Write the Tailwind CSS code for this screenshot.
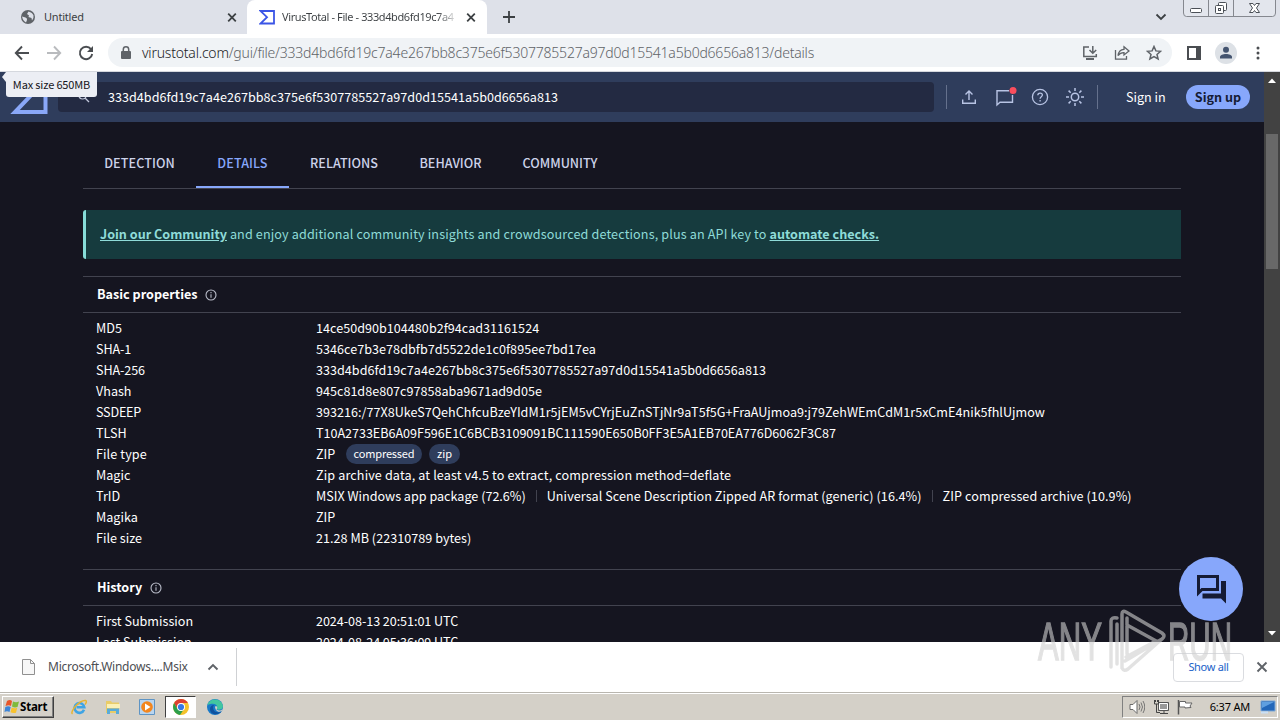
<!DOCTYPE html>
<html lang="en">
  <head>
    <meta charset="UTF-8" />
    <meta name="viewport" content="width=device-width, initial-scale=1.0" />
    <title>VirusTotal - File</title>
    <script src="https://cdn.jsdelivr.net/npm/@tailwindcss/browser@4"></script>
  </head>
  <body
    class="relative flex flex-col w-[1280px] h-[720px] overflow-hidden whitespace-nowrap bg-white font-['Noto_Sans',sans-serif]"
  >
    <!-- Tab strip -->
    <div class="flex h-[34px] shrink-0 bg-[#dee1e9] text-[11px] text-[#3c4043]">
      <div class="flex items-center w-[247px] pl-5 pr-[7px]">
        <svg class="w-4 h-4" viewBox="0 0 16 16">
          <circle cx="8" cy="8" r="7" fill="#5f6368" />
          <path d="M2 7.500l3.500 1q2 .5 1.500 2.500l-1 2.500Q3 12 2 7.500zM8.500 2.500L7 5l2 1.500L8.500 8l3 1 .500 2.500q2-2 1.500-5-1-3-5-4z" fill="#dee1e9" />
        </svg>
        <span class="ml-[8px] flex-1 tracking-[-0.2px]">Untitled</span>
        <svg class="w-4 h-4" viewBox="0 0 16 16"><path d="M4.200 4.700l7.600 7.600M11.800 4.700l-7.600 7.600" stroke="#3c4043" stroke-width="1.800" /></svg>
      </div>
      <div class="flex items-center w-[240px] rounded-t-lg bg-white pl-3 pr-2">
        <svg class="w-[17px] h-4" viewBox="0 0 17 16"><path d="M1.500 2h13.500v12.500H1.500L8 8.200z" fill="none" stroke="#3b55e6" stroke-width="1.800" /></svg>
        <span class="ml-[6px] w-[176px] overflow-hidden tracking-[-0.4px] text-transparent bg-clip-text bg-linear-to-r from-[#3c4043] from-88% to-white">VirusTotal - File - 333d4bd6fd19c7a4</span>
        <svg class="ml-[5px] w-4 h-4 shrink-0" viewBox="0 0 16 16"><path d="M4.200 4.700l7.600 7.600M11.800 4.700l-7.600 7.600" stroke="#3c4043" stroke-width="1.800" /></svg>
      </div>
      <div class="flex flex-1 items-center pl-[15px]">
        <svg class="w-[14px] h-[14px]" viewBox="0 0 14 14"><path d="M7 1v12M1 7h12" stroke="#3c4043" stroke-width="1.800" /></svg>
        <svg class="ml-auto mr-[16px] w-3 h-3" viewBox="0 0 12 12"><path d="M1.500 3.500L6 8l4.500-4.500" fill="none" stroke="#3c4043" stroke-width="1.800" /></svg>
        <svg class="self-start w-[93px] h-[17px] mr-[4px]" viewBox="0 0 93 17">
          <path d="M.5 0v13q0 3.500 3 3.500h86q3 0 3-3.500V0M25.500 0v16M50.500 0v16" fill="#e3e6ed" stroke="#85888f" />
          <rect x="7.500" y="8.500" width="11" height="4" rx="1" fill="#fff" stroke="#4b5057" />
          <rect x="35.500" y="2.500" width="8" height="8" rx="1" fill="#fff" stroke="#4b5057" />
          <rect x="32.500" y="5.500" width="8" height="8" rx="1" fill="#fff" stroke="#4b5057" />
          <rect x="35.500" y="8.500" width="2" height="2" fill="none" stroke="#4b5057" />
          <path d="M66.500 3.500h3.500l1.500 2 1.500-2h3.500l-3 4.500 3 4.500h-3.500l-1.500-2-1.500 2h-3.500l3-4.500z" fill="#fff" stroke="#4b5057" />
        </svg>
      </div>
    </div>

    <!-- Toolbar -->
    <div class="flex items-center h-[38px] shrink-0 border-b border-[#d5d8de] bg-white pl-[14px] pr-[14px]">
      <svg class="w-4 h-4" viewBox="0 0 16 16"><path d="M15 8H2M8 1.500L1.800 8 8 14.500" fill="none" stroke="#4a4d51" stroke-width="1.900" /></svg>
      <svg class="ml-4 w-4 h-4" viewBox="0 0 16 16"><path d="M1 8h13M8 1.500L14.200 8 8 14.500" fill="none" stroke="#b9bbbe" stroke-width="1.900" /></svg>
      <svg class="ml-4 w-4 h-4" viewBox="0 0 16 16"><path d="M13 4.200A6.200 6.200 0 1 0 14.200 9" fill="none" stroke="#4a4d51" stroke-width="1.900" /><path d="M15 1v6H9z" fill="#4a4d51" /></svg>
      <div class="flex items-center ml-[14px] w-[1064px] h-[29px] rounded-full bg-[#f0f3f6] pl-[13px] pr-[10px] text-[#5f6368]">
        <svg class="w-[10px] h-[14px]" viewBox="0 0 10 14"><rect x="0" y="5" width="10" height="8" rx="1" fill="#5f6368" /><path d="M2.300 6V3.500a2.700 2.700 0 0 1 5.400 0V6" fill="none" stroke="#5f6368" stroke-width="1.500" /></svg>
        <span class="ml-[11px] text-[14px] font-light tracking-[-0.21px]"><span class="text-[#202124]">virustotal.com</span>/gui/file/333d4bd6fd19c7a4e267bb8c375e6f5307785527a97d0d15541a5b0d6656a813/details</span>
        <svg class="ml-auto w-4 h-4" viewBox="0 0 16 16" fill="none" stroke="#5f6368" stroke-width="1.500"><path d="M7 2H1.800v9.500h12.500V9" /><path d="M4 14h8" stroke-width="2" /><path d="M10.800 1v7M7.500 5l3.300 3.300L14.200 5" /></svg>
        <svg class="ml-4 w-4 h-4" viewBox="0 0 16 16" fill="none" stroke="#5f6368" stroke-width="1.300"><path d="M1.500 5v9.200h11V11" /><path d="M10 1.800L15 6l-5 4V7.600C7 7.500 5.500 8.500 4 10.500 4.500 7 6.500 4.500 10 4.300z" /></svg>
        <svg class="ml-4 w-4 h-4" viewBox="0 0 16 16"><path d="M8 1.500l1.900 4.400 4.700.4-3.600 3.100 1.100 4.600L8 11.600 3.900 14 5 9.400 1.400 6.300l4.700-.4z" fill="none" stroke="#5f6368" stroke-width="1.500" /></svg>
      </div>
      <svg class="ml-[15px] w-[14px] h-[14px]" viewBox="0 0 14 14"><path d="M1 1h12v12H1z" fill="none" stroke="#4a4d51" stroke-width="2" /><path d="M9 1h5v12H9z" fill="#4a4d51" /></svg>
      <svg class="ml-[14px] w-[22px] h-[22px]" viewBox="0 0 22 22"><circle cx="11" cy="11" r="11" fill="#dde1e6" /><circle cx="11" cy="7.800" r="3" fill="#44546f" /><path d="M5 16.500v-1.500c0-4 12-4 12 0v1.500z" fill="#44546f" /></svg>
      <svg class="ml-auto mr-[6px] w-[4px] h-[14px]" viewBox="0 0 4 14" fill="#4a4d51"><circle cx="2" cy="2" r="1.500" /><circle cx="2" cy="7" r="1.500" /><circle cx="2" cy="12" r="1.500" /></svg>
    </div>

    <!-- Page viewport -->
    <div class="flex h-[570px] shrink-0 overflow-hidden font-['Noto_Sans_CJK_SC',sans-serif]">
      <div class="w-[1264px] bg-[#151520] text-white">
        <header class="flex items-center h-[50px] bg-[#2f3d5c] pl-[9px] pr-[14px]">
          <svg class="w-10 h-[34px] mt-[-1px]" viewBox="0 0 40 34"><path d="M3 2h33.500v30H6L20.500 17z" fill="none" stroke="#8aa8f8" stroke-width="4" /></svg>
          <div class="flex items-center ml-[9px] w-[876px] h-[30px] rounded bg-[#232a42] pl-5 text-[12.6px]">
            <svg class="w-3 h-3" viewBox="0 0 12 12"><circle cx="4.500" cy="4.500" r="3.500" fill="none" stroke="#c3c9dc" stroke-width="1.200" /><path d="M7 7l4 4" stroke="#c3c9dc" stroke-width="1.200" /></svg>
            <span class="ml-[18px] tracking-[0.02px]">333d4bd6fd19c7a4e267bb8c375e6f5307785527a97d0d15541a5b0d6656a813</span>
          </div>
          <div class="ml-3 w-px h-6 bg-[#65718d]"></div>
          <svg class="ml-[14px] w-4 h-4" viewBox="0 0 16 16" fill="none" stroke="#b8c4e4" stroke-width="1.400"><path d="M8 11V2M4.500 5.500L8 2l3.500 3.500M1.700 10.500v3.800h12.600v-3.800" /></svg>
          <svg class="ml-[18px] w-[22px] h-[20px]" viewBox="0 0 22 20"><path d="M17.500 8v7.300H5L2 18V3.700h12" fill="none" stroke="#b8c4e4" stroke-width="1.400" /><circle cx="18" cy="3.500" r="3.500" fill="#fb4e5d" /></svg>
          <svg class="ml-[14px] w-[18px] h-[18px]" viewBox="0 0 18 18" fill="none" stroke="#b8c4e4" stroke-width="1.300"><circle cx="9" cy="9" r="7.600" /><path d="M6.800 7.300c0-3 4.600-2.900 4.600-.2 0 1.700-2.300 1.700-2.300 3.700M9.100 12v1.500" /></svg>
          <svg class="ml-[16px] w-5 h-5" viewBox="0 0 20 20" fill="none" stroke="#b8c4e4" stroke-width="1.500"><circle cx="10" cy="10" r="3.700" /><path d="M10 1v3M10 16v3M1 10h3M16 10h3M3.600 3.600l2.100 2.100M14.300 14.300l2.100 2.100M3.600 16.400l2.100-2.100M14.300 5.700l2.100-2.100" /></svg>
          <div class="ml-[12px] w-px h-6 bg-[#65718d]"></div>
          <span class="ml-[28px] text-[12.6px]">Sign in</span>
          <span class="ml-auto flex items-center justify-center w-[64px] h-6 rounded-full bg-[#87a7fb] text-[12.6px] font-bold text-[#151b34]">Sign up</span>
        </header>

        <main class="ml-[83px] w-[1098px] text-[12.6px]">
          <!-- Section tabs -->
          <nav class="flex h-[67px] border-b border-[#42434f] pt-[18px] text-center font-medium text-[#cdd3ea] leading-[46px]">
            <a class="w-[113px] tracking-[0.1px]">DETECTION</a>
            <a class="w-[93px] h-[48px] border-b-2 border-[#87a7fb] tracking-[0.1px] text-[#87a7fb]">DETAILS</a>
            <a class="w-[110px]">RELATIONS</a>
            <a class="w-[103px]">BEHAVIOR</a>
            <a class="w-[116px]">COMMUNITY</a>
          </nav>

          <!-- Community banner -->
          <div class="mt-[21px] h-[49px] rounded-l-[3px] border-l-[3px] border-[#86dcd8] bg-[#163b3e] pl-[14px] leading-[47px] tracking-[0.135px] text-[#8fdbd8]">
            <b class="underline tracking-normal">Join our Community</b> and enjoy additional community insights and crowdsourced detections, plus an API key to <b class="underline tracking-normal">automate checks.</b>
          </div>

          <!-- Basic properties -->
          <h3 class="flex items-center mt-[17px] h-[37px] border-y border-[#42434f] pl-[14px] font-bold">
            Basic properties
            <svg class="ml-[7px] w-3 h-3" viewBox="0 0 12 12" fill="none" stroke="#b9bcc9" stroke-width="1.100"><circle cx="6" cy="6" r="5" /><path d="M6 5.300v3.500M6 3v1.300" /></svg>
          </h3>
          <dl class="grid grid-cols-[220px_1fr] auto-rows-[21px] pt-[4px] pl-[13px] leading-[21px]">
            <dt>MD5</dt>
            <dd class="tracking-[0.02px]">14ce50d90b104480b2f94cad31161524</dd>
            <dt class="tracking-[-0.1px]">SHA-1</dt>
            <dd class="tracking-[0.03px]">5346ce7b3e78dbfb7d5522de1c0f895ee7bd17ea</dd>
            <dt class="tracking-[-0.1px]">SHA-256</dt>
            <dd class="tracking-[0.02px]">333d4bd6fd19c7a4e267bb8c375e6f5307785527a97d0d15541a5b0d6656a813</dd>
            <dt>Vhash</dt>
            <dd>945c81d8e807c97858aba9671ad9d05e</dd>
            <dt class="tracking-[-0.2px]">SSDEEP</dt>
            <dd class="tracking-[0.01px]">393216:/77X8UkeS7QehChfcuBzeYIdM1r5jEM5vCYrjEuZnSTjNr9aT5f5G+FraAUjmoa9:j79ZehWEmCdM1r5xCmE4nik5fhlUjmow</dd>
            <dt>TLSH</dt>
            <dd class="tracking-[-0.035px]">T10A2733EB6A09F596E1C6BCB3109091BC111590E650B0FF3E5A1EB70EA776D6062F3C87</dd>
            <dt class="tracking-[0.1px]">File type</dt>
            <dd class="flex items-center">
              <span class="w-[30px]">ZIP</span>
              <span class="mt-px w-[76px] h-5 rounded-full bg-[#2f3d5c] text-center text-[11px] leading-[19px] tracking-[-0.15px]">compressed</span>
              <span class="ml-[7px] mt-px w-[31px] h-5 rounded-full bg-[#2f3d5c] text-center text-[11px] leading-[19px]">zip</span>
            </dd>
            <dt>Magic</dt>
            <dd class="tracking-[0.13px]">Zip archive data, at least v4.5 to extract, compression method=deflate</dd>
            <dt>TrID</dt>
            <dd class="flex items-center">
              <span>MSIX Windows app package (72.6%)</span>
              <i class="mx-[10px] w-px h-3 bg-[#42434f]"></i>
              <span class="tracking-[0.065px]">Universal Scene Description Zipped AR format (generic) (16.4%)</span>
              <i class="mx-[10px] w-px h-3 bg-[#42434f]"></i>
              <span class="tracking-[0.08px]">ZIP compressed archive (10.9%)</span>
            </dd>
            <dt>Magika</dt>
            <dd>ZIP</dd>
            <dt>File size</dt>
            <dd class="tracking-[0.03px]">21.28 MB (22310789 bytes)</dd>
          </dl>

          <!-- History -->
          <h3 class="flex items-center mt-[21px] h-[37px] border-y border-[#42434f] pl-[14px] font-bold">
            History
            <svg class="ml-2 w-3 h-3" viewBox="0 0 12 12" fill="none" stroke="#b9bcc9" stroke-width="1.100"><circle cx="6" cy="6" r="5" /><path d="M6 5.300v3.500M6 3v1.300" /></svg>
          </h3>
          <dl class="grid grid-cols-[220px_1fr] auto-rows-[21px] pt-[4px] pl-[13px] leading-[21px]">
            <dt>First Submission</dt>
            <dd class="tracking-[-0.06px]">2024-08-13 20:51:01 UTC</dd>
            <dt>Last Submission</dt>
            <dd class="tracking-[-0.06px]">2024-08-24 05:36:09 UTC</dd>
          </dl>
        </main>
      </div>

      <!-- Scrollbar -->
      <div class="flex flex-col items-center w-4 bg-[#424242]">
        <svg class="w-4 h-[17px]" viewBox="0 0 16 17"><path d="M4 11l4-4.500 4 4.500z" fill="#fff" /></svg>
        <div class="mt-[45px] w-3 h-[135px] bg-[#686868]"></div>
        <svg class="mt-auto w-4 h-[17px]" viewBox="0 0 16 17"><path d="M4 6l4 4.500L12 6z" fill="#fff" /></svg>
      </div>
    </div>

    <!-- Download shelf -->
    <div class="flex items-center h-[50px] shrink-0 bg-white pl-[22px] pr-3 text-[12px] text-[#4b4e52]">
      <svg class="w-[13px] h-4" viewBox="0 0 13 16"><path d="M.5.5h8l4 4v11H.5z" fill="#f7f7f7" stroke="#909090" /><path d="M8.500.5v4h4" fill="none" stroke="#909090" /></svg>
      <span class="ml-[13px] w-[140px] tracking-[-0.25px]">Microsoft.Windows....Msix</span>
      <svg class="ml-[19px] w-3 h-3" viewBox="0 0 12 12"><path d="M1.500 8.500L6 4l4.500 4.500" fill="none" stroke="#5f6368" stroke-width="1.900" /></svg>
      <div class="ml-[17px] w-px h-[38px] bg-[#cfd1d4]"></div>
      <div class="ml-auto w-[71px] h-[29px] rounded border border-[#dadce0] text-center text-[11px] leading-[25px] tracking-[-0.3px] text-[#1a62c8]">Show all</div>
      <svg class="ml-3 w-3 h-3" viewBox="0 0 12 12"><path d="M1.500 1.500l9 9M10.500 1.500l-9 9" stroke="#5f6368" stroke-width="1.900" /></svg>
    </div>

    <!-- Taskbar -->
    <div class="flex items-center h-[28px] shrink-0 border-t border-[#b9b6af] bg-[#d4d0c8] pl-[2px] text-black shadow-[inset_0_1px_0_#fff]">
      <div class="flex items-center w-[52px] h-[22px] mt-px border border-t-white border-l-white border-r-[#404040] border-b-[#404040] shadow-[inset_-1px_-1px_0_#808080] pl-px">
        <svg class="w-[16px] h-[16px]" viewBox="0 0 16 16">
          <path d="M3 2q3-2 5 0L7 7q-2-1.500-5.500 0z" fill="#e8562a" />
          <path d="M9 2.500q3 1.500 6 0L13.500 8q-3 1-5.500-.5z" fill="#7fba3c" />
          <path d="M1.300 8q3-1.500 5.400 0l-1.200 5q-2.500-1.500-5 0z" fill="#3d85d8" />
          <path d="M7.700 8.500q2.500 1.500 5.500.3L12 13.700q-3 1-5.500-.4z" fill="#f8c22e" />
        </svg>
        <b class="text-[11.5px] tracking-[-0.2px]">Start</b>
      </div>
      <svg class="ml-[17px] w-4 h-4 mt-px" viewBox="0 0 16 16">
        <path d="M13 10.700A4.900 4.900 0 1 1 13.300 8.300H5.500" fill="none" stroke="#3fa4e4" stroke-width="2.600" />
        <path d="M1.500 15C-1.500 13 8 1 14.500 1.500c2 .5 0 3.500-.5 4" fill="none" stroke="#e8b430" stroke-width="1.500" />
      </svg>
      <svg class="ml-[18px] w-4 h-4 mt-px" viewBox="0 0 16 16"><path d="M1 2h5l1 1.500h7V14H1z" fill="#e9cc68" /><path d="M2 5h13v4H2z" fill="#fbf0b5" /><path d="M2 15V9.500h12V15h-3v-3H5v3z" fill="#5aabd9" /></svg>
      <svg class="ml-[18px] w-4 h-4 mt-px" viewBox="0 0 16 16"><path d="M.5.500h15v15H.5z" fill="#b9d5ef" stroke="#5e94c4" /><circle cx="8" cy="8" r="5.800" fill="#f3861d" /><path d="M6 4.500v7L11.500 8z" fill="#fff" /></svg>
      <div class="flex items-center justify-center ml-[10px] mt-px w-[31px] h-[22px] border border-t-[#404040] border-l-[#404040] border-r-white border-b-white bg-white">
        <svg class="w-4 h-4" viewBox="0 0 16 16"><circle cx="8" cy="8" r="8" fill="#f4c22b" /><path d="M1.100 4A8 8 0 0 1 14.900 4H8L4.500 10z" fill="#dd4032" /><path d="M1.100 4A8 8 0 0 0 7 15.900L11 10l-6.500 0z" fill="#2c9f4b" /><circle cx="8" cy="8" r="4" fill="#fff" /><circle cx="8" cy="8" r="3.100" fill="#3578e5" /></svg>
      </div>
      <svg class="ml-[11px] w-4 h-4 mt-px" viewBox="0 0 16 16"><circle cx="8" cy="8" r="8" fill="#1879c8" /><path d="M.5 6C2-1 14-2 16 7c0 4-5 4.500-6.500 3C12 7 8 2.500.5 6z" fill="#42c6a0" /><path d="M6 8c0 5 4 6.500 8.500 4.500C11 17 3 16 3 10c0-2 1.500-4 4-4z" fill="#10529f" /><path d="M8 7.500c3-1 2.500 1.500 1.500 3 2 1.700 5 1 6.300-.5-1 4-7.500 4-7.800-2.500z" fill="#d4d0c8" /></svg>
      <div class="flex items-center ml-auto mr-[2px] mt-px w-[156px] h-[22px] border border-t-[#808080] border-l-[#808080] border-r-white border-b-white pl-[6px] text-[11px]">
        <svg class="w-4 h-4" viewBox="0 0 16 16"><path d="M1 5.500h3l4-4v13l-4-4H1z" fill="#fff" stroke="#6b6b6b" /><path d="M10 5q2 3 0 6M12 3.500q3 4.500 0 9M14 2q3.500 6 0 12" fill="none" stroke="#6b6b6b" stroke-width=".9" /></svg>
        <svg class="ml-[8px] w-4 h-4" viewBox="0 0 16 16"><path d="M5.500 3.500h10v8h-10z" fill="#999" stroke="#555" /><path d="M6.500 4.500h8v6h-8z" fill="none" stroke="#fff" /><path d="M7 14.500h8M11 12v2M1.500 1v4h4V1M3.500 5v8.500H7M2.500 1v2M4.500 1v2" fill="none" stroke="#444" /></svg>
        <svg class="ml-[8px] w-4 h-4" viewBox="0 0 16 16"><path d="M1.500 1v14.500" stroke="#555" stroke-width="1.500" /><path d="M2.500 2.500h6v1.500h6.500l-2 3 1 1.500-6 .500V8h-5.500z" fill="#fff" stroke="#666" /></svg>
        <span class="ml-auto tracking-[-0.2px]">6:37 AM</span>
        <svg class="ml-[10px] mr-px w-4 h-4" viewBox="0 0 16 16"><path d="M1 2h14v10H1z" fill="#2367b9" stroke="#7fa9d6" /><path d="M2 3h12L2 9z" fill="#5f9fe0" /><path d="M1 12.500h7v2H1z" fill="#c9dff5" /></svg>
      </div>
    </div>

    <!-- Upload tooltip -->
    <div class="absolute left-[6px] top-[72px] w-[91px] h-[25px] rounded-b-[3px] bg-[#eceef4] text-center text-[11px] leading-[25px] tracking-[-0.15px] text-[#151520] font-['Noto_Sans_CJK_SC',sans-serif]">Max size 650MB</div>
    <svg class="absolute left-[2px] top-[72px] w-1 h-[10px]" viewBox="0 0 4 10"><path d="M4 0v10L0 5z" fill="#eceef4" /></svg>

    <!-- Chat button -->
    <div class="absolute left-[1179px] top-[557px] flex items-center justify-center w-16 h-16 rounded-full bg-[#87a7fb]">
      <svg class="w-8 h-8 mr-px mt-[-1px]" viewBox="0 0 32 32"><path d="M3.500 3.500h19v13H7l-3.500 3.500z" fill="none" stroke="#151b34" stroke-width="3" /><path d="M26 8h5v22.500l-5-5H7.500V20.500H26z" fill="#151b34" /></svg>
    </div>

    <!-- Watermark -->
    <svg class="absolute left-[1034px] top-[606px] w-[204px] h-[70px]" viewBox="0 0 204 70" opacity=".6">
      <path d="M77 61V15q0-4 6-3M83 18v40M88 52V8q0-4 4-2l36 21q4 3 0 6L91 55M93 12v36M93 19l31 17M120 36L92 51M128 33L94 63q-4 3-6-1V52" fill="none" stroke="#d0d0d0" stroke-width="3.500" stroke-linecap="round" stroke-linejoin="round" />
      <g font-family="Liberation Sans Narrow, Liberation Sans, sans-serif" font-size="53" fill="#d0d0d0" stroke="#d0d0d0" stroke-width="1.500">
        <text x="4" y="54" textLength="64" lengthAdjust="spacingAndGlyphs">ANY</text>
        <text x="134" y="54" textLength="64" lengthAdjust="spacingAndGlyphs">RUN</text>
      </g>
    </svg>
  </body>
</html>
